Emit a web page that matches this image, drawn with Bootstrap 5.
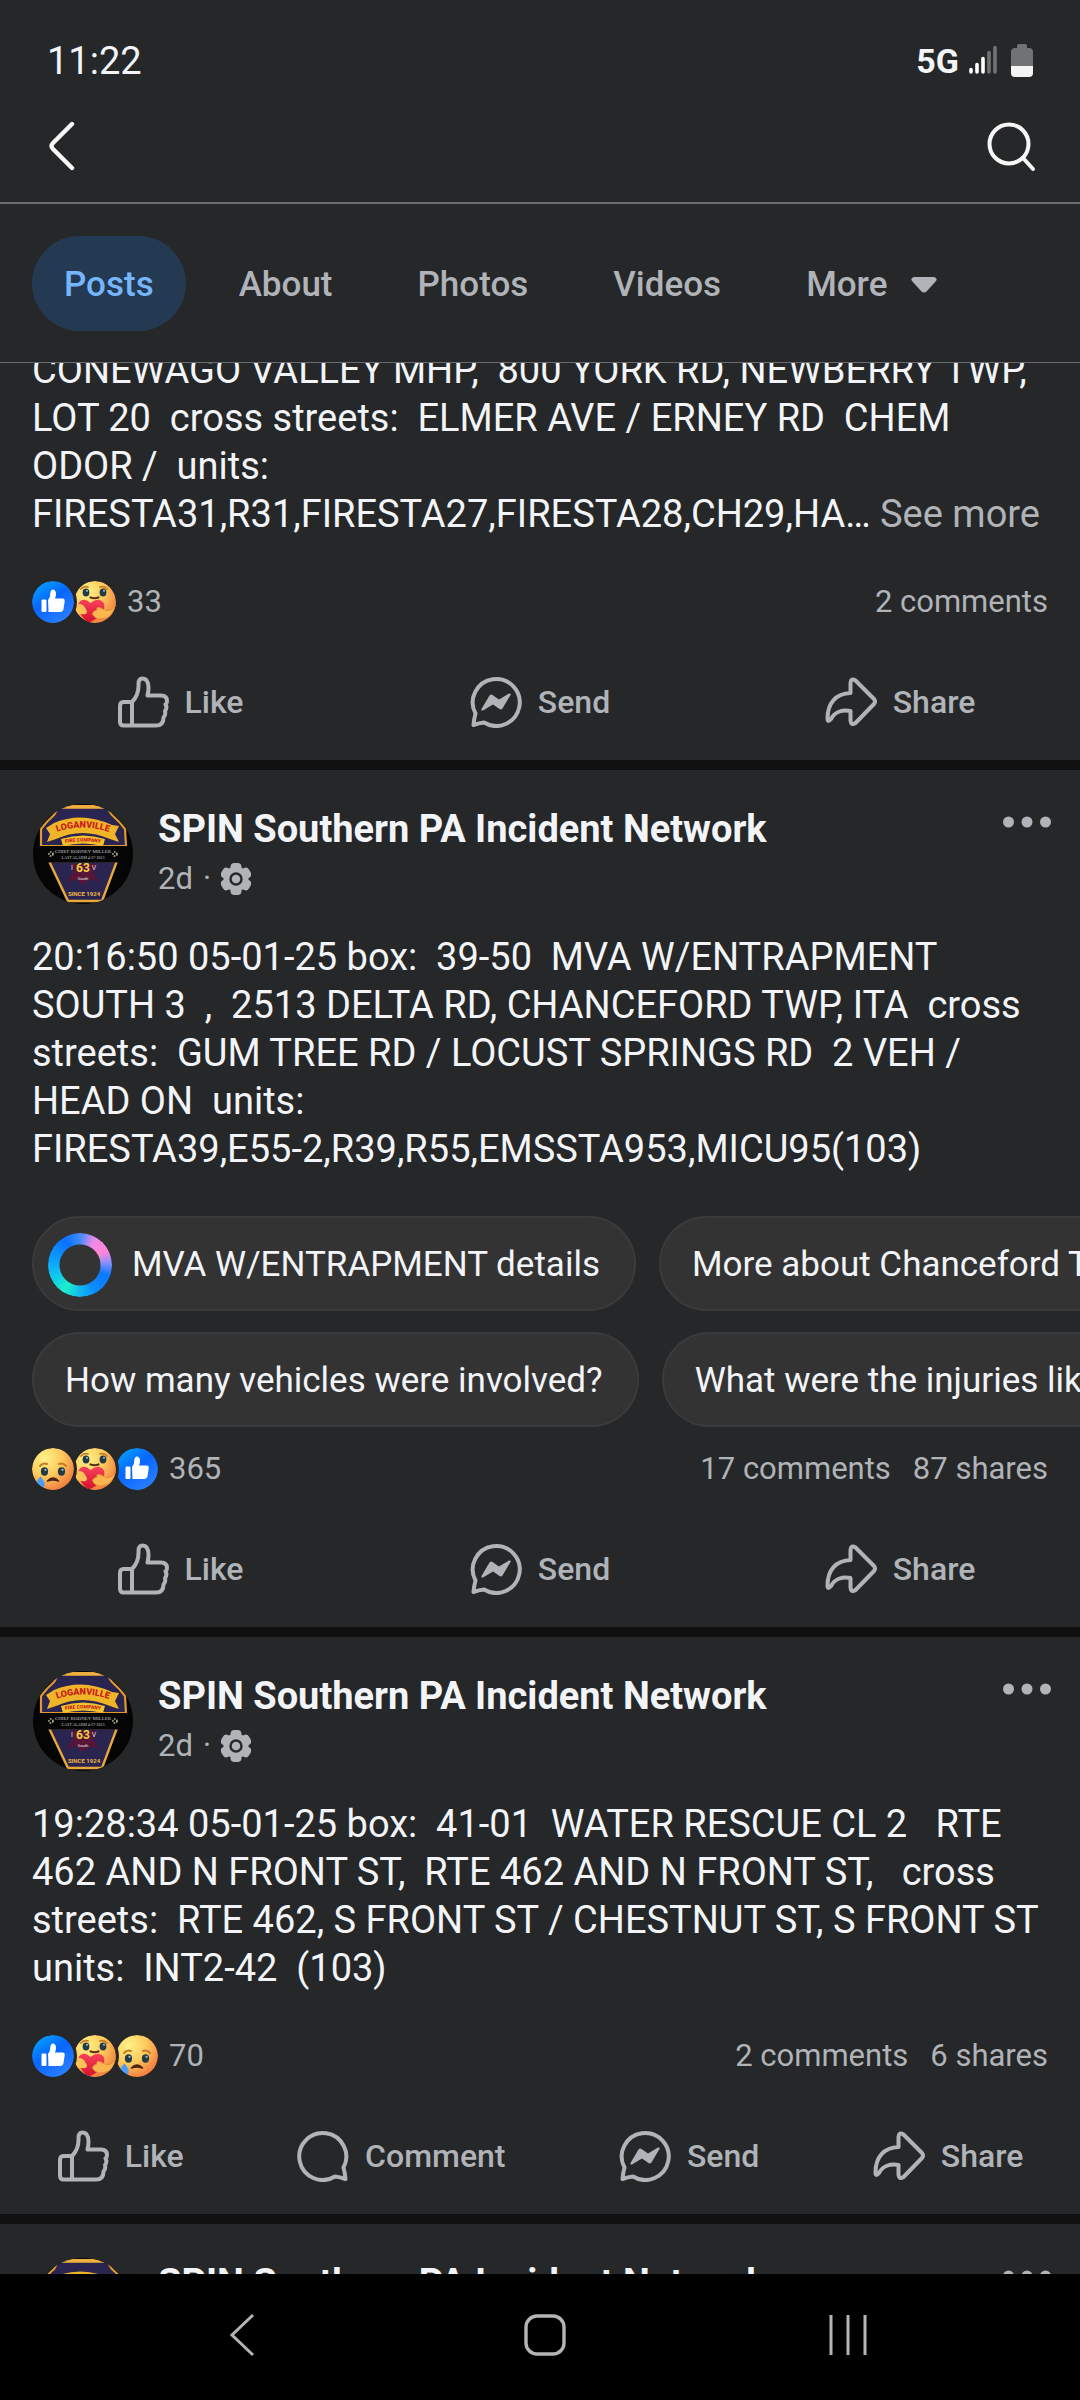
<!DOCTYPE html>
<html lang="en">
<head>
<meta charset="utf-8">
<meta name="viewport" content="width=device-width, initial-scale=1">
<title>SPIN Southern PA Incident Network</title>
<link href="https://cdn.jsdelivr.net/npm/bootstrap@5.3.0/dist/css/bootstrap.min.css" rel="stylesheet">
<style>
  :root { --surface: #252728; --ink: #f2f4f7; --muted: #b0b3b8; --gutter: 32px; }
  body { background: var(--surface); color: var(--ink); font-family: Roboto, "Liberation Sans", sans-serif; font-size: 38px; line-height: 48px; }
  svg { display: block; flex: none; }
  button { font-family: inherit; }
  .plain-btn { background: none; border: 0; padding: 0; color: inherit; }
  .muted { color: var(--muted); }
  .px-gutter { padding-left: var(--gutter); padding-right: var(--gutter); }

  .status-bar { height: 92px; padding: 30px 47px 0 47px; }
  .status-bar > * { height: 62px; }
  .status-signal { font-size: 34px; gap: 10px; }
  .app-bar { height: 112px; padding: 0 43px 2px 46px; border-bottom: 2px solid #6a6b6e; }
  .tab-strip { height: 159px; gap: 21px; padding-top: 32px; border-bottom: 1px solid #6a6b6e; }
  .tab-strip .nav-link { height: 95px; padding: 2px 32px 0; border-radius: 48px; font-size: 35px; font-weight: 500; color: var(--muted); display: flex; align-items: center; gap: 24px; }
  .tab-strip .nav-link.active { background: #243a52; color: #75b6ff; }

  .feed { min-height: 0; }
  .post { border-bottom: 10px solid #101010; }
  .post.scrolled { margin-top: -17px; }
  .post-head { padding-top: 33px; gap: 24px; margin-bottom: 28px; }
  .avatar { width: 102px; height: 102px; }
  .author { font-size: 38px; font-weight: 700; line-height: 48px; color: var(--ink); margin: 2px 0 8px; }
  .stamp { font-size: 31px; line-height: 36px; gap: 10px; }
  .menu-btn { padding: 13px 0 0; margin-right: -3px; }
  .post-text { white-space: pre-wrap; margin: 0; }

  .chip-rows { margin-top: 43px; display: flex; flex-direction: column; gap: 21px; }
  .chip-row { gap: 23px; overflow: hidden; padding-left: var(--gutter); }
  .chip-btn { flex: none; height: 95px; padding: 2px 34px 0 31px; border: 2px solid #3a3b3c; border-radius: 48px; background: #333334; color: var(--ink); font-size: 35px; display: flex; align-items: center; gap: 20px; white-space: nowrap; }
  .chip-btn.with-ring { padding-left: 14px; }
  .ai-ring { width: 64px; height: 64px; border-radius: 50%; background: conic-gradient(#3f8cff 0deg, #f08ae8 30deg, #ff86d6 62deg, #8a90ff 85deg, #0a78ff 110deg, #0a8cff 150deg, #12b8f0 180deg, #1cf0c8 212deg, #10c8f0 245deg, #0a9cff 285deg, #0a70ff 330deg, #3f8cff 360deg); -webkit-mask: radial-gradient(circle, transparent 20px, #000 21px); mask: radial-gradient(circle, transparent 20px, #000 21px); }

  .counts { margin-top: 43px; font-size: 31px; line-height: 42px; color: var(--muted); }
  .chip-rows + .counts { margin-top: 21px; }
  .counts svg { position: relative; width: 42px; height: 42px; border-radius: 50%; box-shadow: 0 0 0 3px var(--surface); }
  .counts .tally { margin-left: 11px; }
  .totals { gap: 22px; }
  .actions { padding-top: 20px; height: 137px; }
  .actions button { flex: 1 1 auto; gap: 16px; display: flex; align-items: center; justify-content: center; font-size: 32px; font-weight: 500; color: var(--muted); }
  .actions.thirds button { flex-basis: 0; }

  .nav-keys { flex: none; height: 126px; background: #000; padding: 0 80px 4px 90px; }
</style>
<script src="https://cdn.jsdelivr.net/npm/bootstrap@5.3.0/dist/js/bootstrap.bundle.min.js"></script>
</head>
<body class="d-flex flex-column vh-100 overflow-hidden">

<svg width="0" height="0" class="position-absolute" aria-hidden="true">
  <defs>
    <linearGradient id="gBlue" x1="0" y1="0" x2=".7" y2="1"><stop offset="0" stop-color="#02adfc"/><stop offset=".5" stop-color="#0866ff"/><stop offset="1" stop-color="#2b7eff"/></linearGradient>
    <radialGradient id="gFace" cx=".3" cy=".25" r=".85"><stop offset="0" stop-color="#fff287"/><stop offset=".5" stop-color="#fdc95c"/><stop offset="1" stop-color="#f0743c"/></radialGradient>
    <linearGradient id="gHeart" x1="0" y1="0" x2="0" y2="1"><stop offset="0" stop-color="#f8405a"/><stop offset="1" stop-color="#d3122c"/></linearGradient>
    <path id="arcTop" d="M22 30 Q50 19 80 30"/>
    <path id="arcMid" d="M28 41 Q50 36 74 41"/>

    <symbol id="like" viewBox="0 0 52 52"><path d="M15 26H6.500Q3 26 3 30V45.500Q3 49.500 6.500 49.500H15ZM15 26Q22 19 21.500 8Q21.500 2.500 25.500 2.500Q31.500 2.500 31.500 12Q31.500 15.500 30.500 19.500H44Q50 19.500 50 25Q50 27.500 48.500 28.500Q50.500 32 48 35Q49 39 46.500 41.500Q46.500 49.500 39 49.500H15" fill="none" stroke="#b0b3b8" stroke-width="4" stroke-linejoin="round"/></symbol>
    <symbol id="comment" viewBox="0 0 52 52"><path d="M46.500 37.500A23.500 23.500 0 1 0 38 46.500Q43 47 48.500 49Q48 43 46.500 37.500Z" fill="none" stroke="#b0b3b8" stroke-width="4" stroke-linejoin="round"/></symbol>
    <symbol id="send" viewBox="0 0 52 52"><path d="M5.500 37.500A23.500 23.500 0 1 1 14 46.500Q9 47 3.500 49Q4 43 5.500 37.500Z" fill="none" stroke="#b0b3b8" stroke-width="4" stroke-linejoin="round"/><path d="M11.500 33L19.500 19.500Q21 18 22.500 19L29 23.500L39 17.500Q41.500 17 40.500 19L32.500 32.500Q31 34 29.500 33L23 28.500L13 34.500Q11 35 11.500 33Z" fill="#b0b3b8"/></symbol>
    <symbol id="share" viewBox="0 0 52 52"><path d="M25.500 17V7Q26 1.500 30.500 4.500L49 23Q51 25.500 49 28L30.500 47Q26 50 25.500 44.500V35C17 33.500 9.500 36 6 43Q2.500 47 2.500 42.500C2.500 27 11 17.500 25.500 17Z" fill="none" stroke="#b0b3b8" stroke-width="4" stroke-linejoin="round"/></symbol>
    <symbol id="gear" viewBox="0 0 30 32"><g fill="#b0b3b8"><circle cx="15" cy="16" r="12.500"/><rect x="9.500" y="0" width="11" height="32" rx="4"/><rect x="9.500" y="0" width="11" height="32" rx="4" transform="rotate(60 15 16)"/><rect x="9.500" y="0" width="11" height="32" rx="4" transform="rotate(120 15 16)"/></g><circle cx="15" cy="16" r="5.500" fill="none" stroke="#252728" stroke-width="2.400"/></symbol>
    <symbol id="dots" viewBox="0 0 48 12"><g fill="#b0b3b8"><circle cx="5.500" cy="6" r="5.500"/><circle cx="24" cy="6" r="5.500"/><circle cx="42.500" cy="6" r="5.500"/></g></symbol>

    <symbol id="rLike" viewBox="0 0 42 42"><circle cx="21" cy="21" r="21" fill="url(#gBlue)"/><rect x="9.500" y="18.500" width="5" height="12.500" rx="1.200" fill="#fff"/><path d="M16 19Q18.500 16 18.500 11Q19 8.500 20.500 8.500Q24 8.500 24 13Q24 15.500 23 17.500H30.500Q33 17.500 32.700 20.500L31.500 28Q31 31 28 31H16.500Z" fill="#fff"/></symbol>
    <symbol id="rCare" viewBox="0 0 42 42"><circle cx="21" cy="21" r="21" fill="url(#gFace)"/><path d="M7 8Q10 4.500 14 6M26 6Q30 4.500 33 8" fill="none" stroke="#c47a26" stroke-width="1.800" stroke-linecap="round"/><ellipse cx="12" cy="11.500" rx="3.400" ry="4" fill="#243b46"/><ellipse cx="29" cy="11.500" rx="3.400" ry="4" fill="#243b46"/><circle cx="13" cy="9.800" r="1" fill="#a9c3cf"/><circle cx="30" cy="9.800" r="1" fill="#a9c3cf"/><path d="M16.500 16.500Q20.500 18 24.500 16.500" fill="none" stroke="#5b2d1a" stroke-width="2.200" stroke-linecap="round"/><path d="M14 42Q1 29 4 23Q9 15 16.500 22Q25 15.500 30 22.500Q33 34 14 42Z" fill="url(#gHeart)"/><path d="M1 26Q4 20 10 25L13 30Q13 34 8 33Q3 34 1 29Z" fill="#fcc257"/><path d="M42 23Q37 34 27 27Q22 25 23 29Q17 31 19 34Q22 39 30 37.500Q38 37 42 23Z" fill="#fbb650" stroke="#e58a35" stroke-width=".8"/></symbol>
    <symbol id="rSad" viewBox="0 0 42 42"><circle cx="21" cy="21" r="21" fill="url(#gFace)"/><path d="M8 18Q11 14.500 15 16M27 16Q31 14.500 34 18" fill="none" stroke="#c47a26" stroke-width="2" stroke-linecap="round"/><ellipse cx="12.500" cy="23.500" rx="3.600" ry="4.200" fill="#243b46"/><ellipse cx="29.500" cy="23.500" rx="3.600" ry="4.200" fill="#243b46"/><circle cx="13.500" cy="21.800" r="1.100" fill="#a9c3cf"/><circle cx="30.500" cy="21.800" r="1.100" fill="#a9c3cf"/><path d="M15.500 33Q21 27 26.500 33Q21 31 15.500 33Z" fill="#4b2418" stroke="#4b2418" stroke-width="1.600" stroke-linejoin="round"/><path d="M8.500 28.500Q13.500 34 12.500 38Q11 42 7 42Q3.500 41 3.500 37Q4 33 8.500 28.500Z" fill="#4a9df5"/></symbol>

    <symbol id="crest" viewBox="0 0 102 102">
      <clipPath id="disc"><circle cx="51" cy="51" r="50"/></clipPath>
      <g clip-path="url(#disc)">
        <rect width="102" height="102" fill="#050505"/>
        <path d="M27 3H74L80 12Q88 19 93 26L94 43H9V26Q15 18 22 12Z" fill="#2a2450" stroke="#e09a2a" stroke-width="2.200"/>
        <path d="M27 4H74" stroke="#f0b040" stroke-width="3.400"/>
        <path d="M17 58L36 98H70L85 58Z" fill="#2a2450" stroke="#e8a83a" stroke-width="2.400"/>
        <rect x="5" y="43" width="92" height="16.500" fill="#060607"/>
        <path d="M22 20Q50 8 80 22L87 23L83 31L87 39L78 36Q50 24 24 36L15 39L18 31L14 25Z" fill="#f0b428"/>
        <path d="M29 36Q51 29 73 36L71 43Q51 38 31 43Z" fill="#f3c030"/>
        <g font-family="Roboto, sans-serif" text-anchor="middle">
          <g font-weight="900" fill="#c8201c"><text font-size="9"><textPath href="#arcTop" startOffset="50%">LOGANVILLE</textPath></text><text font-size="5"><textPath href="#arcMid" startOffset="50%">FIRE COMPANY</textPath></text></g>
          <g font-family="Liberation Serif, serif" fill="#c8c8c8"><text x="51" y="50" font-size="5">CHIEF RODNEY MILLER</text><text x="51" y="56" font-size="4">LAST ALARM 4-27-2013</text></g>
          <path d="M38 61H64L61 69L67 79L58 76L51 82L44 76L35 79L41 69Z" fill="#571638"/>
          <text x="51" y="69" font-size="12" font-weight="700" fill="#f0d040">63</text>
          <text x="40" y="67" font-size="7" fill="#ddd">I</text><text x="62" y="67" font-size="7" fill="#ddd">V</text>
          <text x="51" y="77" font-size="4" fill="#eee">South</text>
          <text x="52" y="93" font-size="6" font-weight="700" fill="#f0b840">SINCE 1924</text>
        </g>
        <g fill="none" stroke="#b9b09a" stroke-width="1.600" stroke-dasharray="1.500 1"><circle cx="19" cy="51" r="2"/><circle cx="83" cy="51" r="2"/></g>
      </g>
    </symbol>
  </defs>
</svg>

<header class="flex-shrink-0">
  <div class="status-bar d-flex justify-content-between">
    <div class="d-flex align-items-center">11:22</div>
    <div class="status-signal d-flex align-items-center fw-bold">
      <span>5G</span>
      <svg width="28" height="32" viewBox="0 0 28 32" aria-label="Signal"><g stroke-width="3.600" stroke-linecap="round" stroke="#fff"><path d="M2 24.500V27M8 19.500V27M14 13.500V27"/><path stroke="#717273" d="M20 7.500V27M26 2.500V27" /></g></svg>
      <svg width="22" height="34" viewBox="0 0 22 34" class="ms-1" aria-label="Battery"><path d="M6 2Q6 0 8 0H14Q16 0 16 2V4H18Q22 4 22 8V23H0V8Q0 4 4 4H6Z" fill="#717273"/><path d="M0 22H22V29Q22 33 18 33H4Q0 33 0 29Z" fill="#f4f4f4"/></svg>
    </div>
  </div>
  <div class="app-bar d-flex justify-content-between align-items-center">
    <button class="plain-btn" aria-label="Back"><svg width="30" height="50" viewBox="0 0 30 50"><path d="M26 3L7 22Q4 25 7 28L26 47" fill="none" stroke="#f7f7f8" stroke-width="4.400" stroke-linecap="round"/></svg></button>
    <button class="plain-btn" aria-label="Search"><svg width="51" height="51" viewBox="0 0 51 51"><circle cx="23" cy="23" r="19.500" fill="none" stroke="#f7f7f8" stroke-width="4"/><path d="M37.500 37.500L47 48" stroke="#f7f7f8" stroke-width="4" stroke-linecap="round"/></svg></button>
  </div>
  <nav class="tab-strip nav nav-pills flex-nowrap px-gutter">
    <a class="nav-link active" href="#" aria-current="page">Posts</a>
    <a class="nav-link" href="#">About</a>
    <a class="nav-link" href="#">Photos</a>
    <a class="nav-link" href="#">Videos</a>
    <a class="nav-link" href="#">More <svg width="26" height="16" viewBox="0 0 26 16"><path d="M3 0H23Q27 1 25 4L16 14Q13 17 10 14L1 4Q-1 1 3 0Z" fill="#b0b3b8"/></svg></a>
  </nav>
</header>

<main class="feed flex-grow-1 overflow-hidden">
  <article class="post scrolled">
    <p class="post-text px-gutter">CONEWAGO VALLEY MHP,  800 YORK RD, NEWBERRY TWP,
LOT 20  cross streets:  ELMER AVE / ERNEY RD  CHEM
ODOR /  units:
FIRESTA31,R31,FIRESTA27,FIRESTA28,CH29,HA… <a class="muted text-decoration-none" href="#">See more</a></p>
    <div class="counts d-flex px-gutter">
      <svg class="z-2"><use href="#rLike"/></svg><svg class="z-1"><use href="#rCare"/></svg>
      <span class="tally">33</span>
      <div class="totals d-flex ms-auto"><span>2 comments</span></div>
    </div>
    <div class="actions thirds d-flex">
      <button class="plain-btn"><svg width="52" height="52"><use href="#like"/></svg>Like</button>
      <button class="plain-btn"><svg width="52" height="52"><use href="#send"/></svg>Send</button>
      <button class="plain-btn"><svg width="52" height="52"><use href="#share"/></svg>Share</button>
    </div>
  </article>

  <article class="post">
    <div class="post-head d-flex align-items-start px-gutter">
      <svg class="avatar" role="img" aria-label="Page picture"><use href="#crest"/></svg>
      <div>
        <h2 class="author">SPIN Southern PA Incident Network</h2>
        <div class="stamp d-flex align-items-center muted"><span>2d</span><span>·</span><svg width="30" height="32"><use href="#gear"/></svg></div>
      </div>
      <button class="plain-btn menu-btn ms-auto" aria-label="Post menu"><svg width="48" height="12"><use href="#dots"/></svg></button>
    </div>
    <p class="post-text px-gutter">20:16:50 05-01-25 box:  39-50  MVA W/ENTRAPMENT
SOUTH 3  ,  2513 DELTA RD, CHANCEFORD TWP, ITA  cross
streets:  GUM TREE RD / LOCUST SPRINGS RD  2 VEH /
HEAD ON  units:
FIRESTA39,E55-2,R39,R55,EMSSTA953,MICU95(103)</p>
    <div class="chip-rows">
      <div class="chip-row d-flex">
        <button class="chip-btn with-ring"><span class="ai-ring"></span>MVA W/ENTRAPMENT details</button>
        <button class="chip-btn">More about Chanceford Twp</button>
      </div>
      <div class="chip-row d-flex">
        <button class="chip-btn">How many vehicles were involved?</button>
        <button class="chip-btn">What were the injuries like?</button>
      </div>
    </div>
    <div class="counts d-flex px-gutter">
      <svg class="z-3"><use href="#rSad"/></svg><svg class="z-2"><use href="#rCare"/></svg><svg class="z-1"><use href="#rLike"/></svg>
      <span class="tally">365</span>
      <div class="totals d-flex ms-auto"><span>17 comments</span><span>87 shares</span></div>
    </div>
    <div class="actions thirds d-flex">
      <button class="plain-btn"><svg width="52" height="52"><use href="#like"/></svg>Like</button>
      <button class="plain-btn"><svg width="52" height="52"><use href="#send"/></svg>Send</button>
      <button class="plain-btn"><svg width="52" height="52"><use href="#share"/></svg>Share</button>
    </div>
  </article>

  <article class="post">
    <div class="post-head d-flex align-items-start px-gutter">
      <svg class="avatar" role="img" aria-label="Page picture"><use href="#crest"/></svg>
      <div>
        <h2 class="author">SPIN Southern PA Incident Network</h2>
        <div class="stamp d-flex align-items-center muted"><span>2d</span><span>·</span><svg width="30" height="32"><use href="#gear"/></svg></div>
      </div>
      <button class="plain-btn menu-btn ms-auto" aria-label="Post menu"><svg width="48" height="12"><use href="#dots"/></svg></button>
    </div>
    <p class="post-text px-gutter">19:28:34 05-01-25 box:  41-01  WATER RESCUE CL 2   RTE
462 AND N FRONT ST,  RTE 462 AND N FRONT ST,   cross
streets:  RTE 462, S FRONT ST / CHESTNUT ST, S FRONT ST
units:  INT2-42  (103)</p>
    <div class="counts d-flex px-gutter">
      <svg class="z-3"><use href="#rLike"/></svg><svg class="z-2"><use href="#rCare"/></svg><svg class="z-1"><use href="#rSad"/></svg>
      <span class="tally">70</span>
      <div class="totals d-flex ms-auto"><span>2 comments</span><span>6 shares</span></div>
    </div>
    <div class="actions d-flex">
      <button class="plain-btn"><svg width="52" height="52"><use href="#like"/></svg>Like</button>
      <button class="plain-btn"><svg width="52" height="52"><use href="#comment"/></svg>Comment</button>
      <button class="plain-btn"><svg width="52" height="52"><use href="#send"/></svg>Send</button>
      <button class="plain-btn"><svg width="52" height="52"><use href="#share"/></svg>Share</button>
    </div>
  </article>

  <article class="post">
    <div class="post-head d-flex align-items-start px-gutter">
      <svg class="avatar" role="img" aria-label="Page picture"><use href="#crest"/></svg>
      <h2 class="author">SPIN Southern PA Incident Network</h2>
      <button class="plain-btn menu-btn ms-auto" aria-label="Post menu"><svg width="48" height="12"><use href="#dots"/></svg></button>
    </div>
  </article>
</main>

<nav class="nav-keys d-flex align-items-center" aria-label="System">
  <button class="plain-btn col d-flex justify-content-center" aria-label="Back"><svg width="26" height="44" viewBox="0 0 26 44"><path d="M24 2L3 22L24 42" fill="none" stroke="#b4b4b4" stroke-width="3"/></svg></button>
  <button class="plain-btn col d-flex justify-content-center" aria-label="Home"><svg width="42" height="42" viewBox="0 0 42 42"><rect x="2" y="2" width="38" height="38" rx="11" fill="none" stroke="#b4b4b4" stroke-width="3.400"/></svg></button>
  <button class="plain-btn col d-flex justify-content-center" aria-label="Recent apps"><svg width="40" height="42" viewBox="0 0 40 42"><path d="M3 1V41M20 1V41M37 1V41" stroke="#b4b4b4" stroke-width="3"/></svg></button>
</nav>
</body>
</html>
